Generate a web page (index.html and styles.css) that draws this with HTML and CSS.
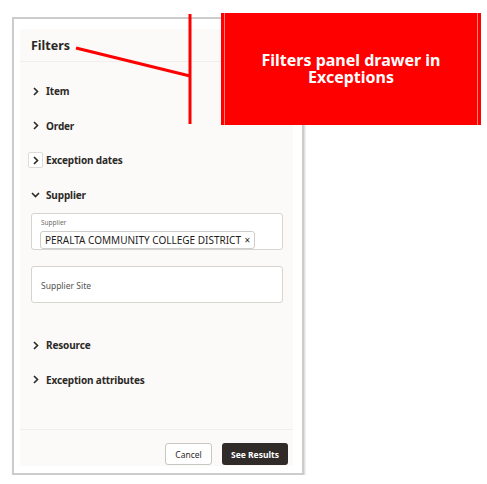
FILE: index.html
```html
<!DOCTYPE html>
<html lang="en">
<head>
    <meta charset="UTF-8">
    <title>Filters panel drawer</title>
    <link rel="stylesheet" href="styles.css">
</head>
<body>

    <!-- Captura del panel -->
    <div class="shot">
        <div class="panel">
            <div class="panel-header">Filters</div>

            <div class="groups">
                <div class="group">
                    <span class="chev"><svg width="6" height="9" viewBox="0 0 6 9"><path d="M1 1 L4.5 4.5 L1 8" fill="none" stroke="#2b2926" stroke-width="1.6"/></svg></span>
                    Item
                </div>
                <div class="group">
                    <span class="chev"><svg width="6" height="9" viewBox="0 0 6 9"><path d="M1 1 L4.5 4.5 L1 8" fill="none" stroke="#2b2926" stroke-width="1.6"/></svg></span>
                    Order
                </div>
                <div class="group">
                    <span class="chev focus"><svg width="6" height="9" viewBox="0 0 6 9"><path d="M1 1 L4.5 4.5 L1 8" fill="none" stroke="#2b2926" stroke-width="1.6"/></svg></span>
                    Exception dates
                </div>
                <div class="group">
                    <span class="chev"><svg width="9" height="6" viewBox="0 0 9 6"><path d="M1 1 L4.5 4.5 L8 1" fill="none" stroke="#2b2926" stroke-width="1.6"/></svg></span>
                    Supplier
                </div>

                <div class="field">
                    <div class="field-label">Supplier</div>
                    <div class="chip">PERALTA COMMUNITY COLLEGE DISTRICT <span class="chip-x">×</span></div>
                </div>
                <div class="field field-empty">
                    <div class="placeholder">Supplier Site</div>
                </div>

                <div class="group group-after">
                    <span class="chev"><svg width="6" height="9" viewBox="0 0 6 9"><path d="M1 1 L4.5 4.5 L1 8" fill="none" stroke="#2b2926" stroke-width="1.6"/></svg></span>
                    Resource
                </div>
                <div class="group">
                    <span class="chev"><svg width="6" height="9" viewBox="0 0 6 9"><path d="M1 1 L4.5 4.5 L1 8" fill="none" stroke="#2b2926" stroke-width="1.6"/></svg></span>
                    Exception attributes
                </div>
            </div>

            <div class="panel-footer">
                <button class="btn btn-cancel">Cancel</button>
                <button class="btn btn-primary">See Results</button>
            </div>
        </div>
    </div>

    <!-- Anotación -->
    <svg class="pointer" width="487" height="140" viewBox="0 0 487 140">
        <line x1="190" y1="14" x2="190" y2="124" stroke="#fe0000" stroke-width="3"/>
        <line x1="76" y1="48" x2="190" y2="76" stroke="#fe0000" stroke-width="3"/>
    </svg>
    <div class="callout">Filters panel drawer in Exceptions</div>

</body>
</html>
```

FILE: styles.css
```css
/* Estilos generales */
body {
    margin: 0;
    padding: 0;
    background-color: #ffffff;
    font-family: 'Noto Sans', 'Open Sans', Arial, sans-serif;
    color: #2b2926;
}

/* Marco de la captura */
.shot {
    margin: 17px 0 0 12px;
    width: 292px;
    height: 458px;
    box-sizing: border-box;
    border: 2px solid #cdcccb;
    box-shadow: 1px 2px 2px rgba(0, 0, 0, 0.18);
    background-color: #ffffff;
    padding: 10px 9px 7px 6px;
}

.panel {
    height: 100%;
    background-color: #fbfaf8;
    display: flex;
    flex-direction: column;
}

.panel-header {
    height: 33px;
    box-sizing: border-box;
    padding: 8px 0 0 11px;
    font-size: 12.5px;
    font-weight: bold;
    border-bottom: 1px solid #f1efec;
}

.groups {
    padding: 12px 10px 0 11px;
}

.group {
    height: 34.5px;
    display: flex;
    align-items: center;
    font-size: 10px;
    letter-spacing: -0.15px;
    font-weight: bold;
}

.group-after {
    margin-top: 25px;
}

.chev {
    width: 15px;
    height: 16px;
    margin-left: -3px;
    margin-right: 3px;
    box-sizing: border-box;
    display: flex;
    align-items: center;
    justify-content: center;
}

.chev.focus {
    border: 1px solid #dedcd9;
    border-radius: 2px;
    background-color: #ffffff;
}

/* Campos del proveedor */
.field {
    margin-top: 1px;
    height: 37px;
    box-sizing: border-box;
    border: 1px solid #d6d4d1;
    border-radius: 3px;
    background-color: #ffffff;
    padding: 5px 8px 0 8px;
}

.field-label {
    font-size: 6.5px;
    color: #6f6c69;
    line-height: 8px;
    padding-left: 1px;
}

.chip {
    display: inline-block;
    margin-top: -1px;
    padding: 1px 4px 1px 4px;
    border: 1px solid #cfcdca;
    border-radius: 3px;
    font-size: 10px;
    line-height: 14px;
    white-space: nowrap;
    color: #1f1d1b;
}

.chip-x {
    margin-left: 1px;
    font-size: 10px;
}

.field-empty {
    margin-top: 16px;
    padding-top: 13px;
    padding-left: 9px;
}

.placeholder {
    font-size: 8.5px;
    color: #55524f;
}

/* Pie del panel */
.panel-footer {
    margin-top: auto;
    height: 37px;
    box-sizing: border-box;
    border-top: 1px solid #f1efec;
    display: flex;
    justify-content: flex-end;
    align-items: flex-end;
    gap: 10px;
    padding: 0 5px 1px 0;
}

.btn {
    height: 22px;
    box-sizing: border-box;
    border-radius: 3px;
    font-family: 'Noto Sans', Arial, sans-serif;
    font-size: 8.5px;
    padding: 0;
}

.btn-cancel {
    width: 47px;
    border: 1px solid #c9c7c4;
    background-color: #ffffff;
    color: #2b2926;
}

.btn-primary {
    width: 66px;
    border: none;
    background-color: #302b28;
    color: #ffffff;
    font-weight: bold;
}

/* Anotación roja */
.pointer {
    position: absolute;
    left: 0;
    top: 0;
}

.callout {
    position: absolute;
    left: 221px;
    top: 13px;
    width: 260px;
    height: 112px;
    box-sizing: border-box;
    background-color: #fe0000;
    border-left: 3px solid #fe0000;
    border-right: 3px solid #fe0000;
    box-shadow: inset 1px 0 0 #ff7f7f, inset -1px 0 0 #ff7f7f;
    color: #ffffff;
    font-family: 'Noto Sans', Arial, sans-serif;
    font-weight: bold;
    font-size: 16px;
    line-height: 17px;
    text-align: center;
    padding: 39px 20px 0 20px;
}
```
